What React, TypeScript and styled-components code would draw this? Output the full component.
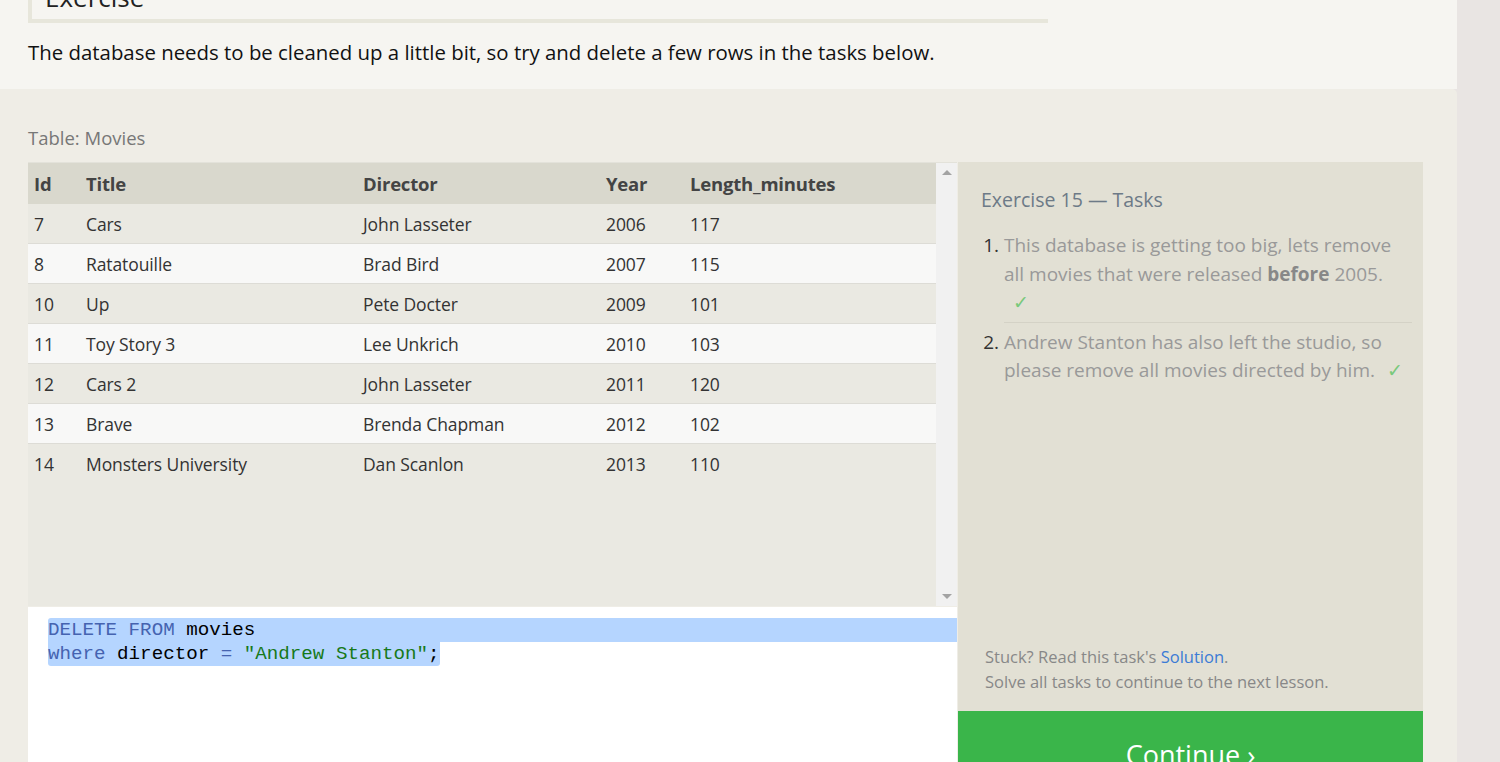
import React from 'react';
import styled, { createGlobalStyle } from 'styled-components';

const GlobalStyle = createGlobalStyle`
  html, body {
    margin: 0;
    padding: 0;
    background: #e9e5e3;
    font-family: "Open Sans", "Noto Sans", sans-serif;
    overflow: hidden;
  }
`;

interface Movie {
  id: number;
  title: string;
  director: string;
  year: number;
  length: number;
}

const movies: Movie[] = [
  { id: 7, title: 'Cars', director: 'John Lasseter', year: 2006, length: 117 },
  { id: 8, title: 'Ratatouille', director: 'Brad Bird', year: 2007, length: 115 },
  { id: 10, title: 'Up', director: 'Pete Docter', year: 2009, length: 101 },
  { id: 11, title: 'Toy Story 3', director: 'Lee Unkrich', year: 2010, length: 103 },
  { id: 12, title: 'Cars 2', director: 'John Lasseter', year: 2011, length: 120 },
  { id: 13, title: 'Brave', director: 'Brenda Chapman', year: 2012, length: 102 },
  { id: 14, title: 'Monsters University', director: 'Dan Scanlon', year: 2013, length: 110 },
];

const Page = styled.div`
  width: 1457px;
  height: 762px;
  overflow: hidden;
`;

const Intro = styled.section`
  display: flow-root;
  background: #f6f5f1;
  padding: 0 28px;
  height: 89px;
  box-sizing: border-box;
`;

const HeadingBox = styled.div`
  width: 1020px;
  height: 70px;
  margin-top: -47px;
  border-left: 4px solid #e7e6db;
  border-bottom: 4px solid #e7e6db;
  box-sizing: border-box;
  padding: 0 0 0 13px;
  font-size: 26px;
  line-height: 88px;
  color: #222;
  overflow: hidden;
`;

const IntroText = styled.p`
  margin: 15px 0 0;
  font-size: 20.4px;
  line-height: 28px;
  color: #111;
  white-space: nowrap;
`;

const Lesson = styled.section`
  background: #efede6;
  border-top-right-radius: 5px;
  padding: 36px 0 0 28px;
  height: 673px;
  box-sizing: border-box;
`;

const TableLabel = styled.div`
  font-size: 18.5px;
  color: #777;
  height: 26px;
  line-height: 26px;
  margin-bottom: 11px;
`;

const Workspace = styled.div`
  display: flex;
  width: 1395px;
`;

const LeftColumn = styled.div`
  width: 929px;
  display: flex;
  flex-direction: column;
`;

const TableFrame = styled.div`
  display: flex;
  height: 443px;
  background: #eae9e2;
  border-top: 1px solid #e3e2da;
`;

const TableScroll = styled.div`
  flex: 1;
  overflow: hidden;
`;

const Scrollbar = styled.div`
  width: 21px;
  background: #f1f1f1;
  display: flex;
  flex-direction: column;
  justify-content: space-between;
  align-items: center;
  padding: 7px 0;
  box-sizing: border-box;
`;

const Arrow = styled.div<{ $down?: boolean }>`
  width: 0;
  height: 0;
  border-left: 5px solid transparent;
  border-right: 5px solid transparent;
  ${(p) => (p.$down ? 'border-top: 5px solid #a3a3a3;' : 'border-bottom: 5px solid #a3a3a3;')}
`;

const StyledTable = styled.table`
  width: 100%;
  border-collapse: collapse;
  table-layout: fixed;
`;

const StyledTh = styled.th<{ $w: number }>`
  width: ${(p) => p.$w - 12}px;
  text-align: left;
  font-weight: 700;
  font-size: 18.5px;
  color: #444;
  background: #d9d8cd;
  height: 41px;
  padding: 0 6px;
  letter-spacing: -0.2px;
`;

const Row = styled.tr<{ $even: boolean }>`
  background: ${(p) => (p.$even ? '#f8f8f7' : '#eae9e2')};
  border-bottom: 1px solid #dddcd6;

  &:last-child {
    border-bottom: none;
  }
`;

const StyledTd = styled.td`
  height: 39px;
  padding: 0 6px;
  font-size: 17.5px;
  color: #333;
  letter-spacing: -0.1px;
  white-space: nowrap;
`;

const Editor = styled.div`
  margin-top: 1px;
  background: #fff;
  height: 160px;
  padding-top: 11px;
  box-sizing: border-box;
  font-family: "Liberation Mono", "DejaVu Sans Mono", monospace;
  font-size: 19.2px;
  line-height: 24px;
`;

const CodeLine = styled.div<{ $full?: boolean }>`
  margin-left: 20px;
  background: #b5d5ff;
  display: ${(p) => (p.$full ? 'block' : 'inline-block')};
  border-radius: ${(p) => (p.$full ? '3px 0 0 0' : '0 0 3px 3px')};
  white-space: pre;
`;

const Keyword = styled.span`
  color: #4563b0;
`;

const Str = styled.span`
  color: #17791a;
`;

const Plain = styled.span`
  color: #000;
`;

const TaskPanel = styled.aside`
  width: 465px;
  margin-left: 1px;
  display: flex;
  flex-direction: column;
`;

const TaskBody = styled.div`
  background: #e2e0d4;
  height: 549px;
  padding: 24px 11px 0 23px;
  box-sizing: border-box;
  display: flex;
  flex-direction: column;
`;

const TaskTitle = styled.h3`
  margin: 0 0 17px;
  font-weight: 400;
  font-size: 19.5px;
  color: #6d7a87;
  line-height: 28px;
`;

const TaskList = styled.ol`
  margin: 0;
  padding: 0 0 0 23px;
  color: #999;
  font-size: 19px;
  line-height: 28.5px;

  li::marker {
    color: #333;
  }
`;

const TaskItem = styled.li<{ $last?: boolean }>`
  padding: 0 0 ${(p) => (p.$last ? '0' : '5px')};
  margin-bottom: 5px;
  border-bottom: ${(p) => (p.$last ? 'none' : '1px solid #d4d2c6')};
`;

const Check = styled.span<{ $gap: number }>`
  color: #79c97b;
  margin-left: ${(p) => p.$gap}px;
`;

const Bold = styled.b`
  color: #888;
`;

const Footer = styled.div`
  margin-top: auto;
  padding: 0 0 17px 4px;
  font-size: 16.5px;
  line-height: 25px;
  color: #888;
`;

const Link = styled.a`
  color: #3b7bd6;
  text-decoration: none;
`;

const ContinueButton = styled.button`
  height: 70px;
  border: none;
  background: #3ab54a;
  color: #fff;
  font-family: "Open Sans", "Noto Sans", sans-serif;
  font-size: 27px;
  padding: 17px 0 0;
  text-align: center;
`;

const columns: Array<{ label: string; w: number }> = [
  { label: 'Id', w: 52 },
  { label: 'Title', w: 277 },
  { label: 'Director', w: 243 },
  { label: 'Year', w: 84 },
  { label: 'Length_minutes', w: 252 },
];

const App = () => (
  <Page>
    <GlobalStyle />
    <Intro>
      <HeadingBox>Exercise</HeadingBox>
      <IntroText>
        The database needs to be cleaned up a little bit, so try and delete a few rows in the tasks below.
      </IntroText>
    </Intro>
    <Lesson>
      <TableLabel>Table: Movies</TableLabel>
      <Workspace>
        <LeftColumn>
          <TableFrame>
            <TableScroll>
              <StyledTable>
                <thead>
                  <tr>
                    {columns.map((c) => (
                      <StyledTh key={c.label} $w={c.w}>{c.label}</StyledTh>
                    ))}
                  </tr>
                </thead>
                <tbody>
                  {movies.map((m, i) => (
                    <Row key={m.id} $even={i % 2 === 1}>
                      <StyledTd>{m.id}</StyledTd>
                      <StyledTd>{m.title}</StyledTd>
                      <StyledTd>{m.director}</StyledTd>
                      <StyledTd>{m.year}</StyledTd>
                      <StyledTd>{m.length}</StyledTd>
                    </Row>
                  ))}
                </tbody>
              </StyledTable>
            </TableScroll>
            <Scrollbar>
              <Arrow />
              <Arrow $down />
            </Scrollbar>
          </TableFrame>
          <Editor>
            <CodeLine $full>
              <Keyword>DELETE FROM</Keyword> <Plain>movies</Plain>
            </CodeLine>
            <CodeLine>
              <Keyword>where</Keyword> <Plain>director</Plain> <Keyword>=</Keyword> <Str>"Andrew Stanton"</Str><Plain>;</Plain>
            </CodeLine>
          </Editor>
        </LeftColumn>
        <TaskPanel>
          <TaskBody>
            <TaskTitle>Exercise 15 — Tasks</TaskTitle>
            <TaskList>
              <TaskItem>
                This database is getting too big, lets remove all movies that were released <Bold>before</Bold> 2005.
                <br />
                <Check $gap={9}>✓</Check>
              </TaskItem>
              <TaskItem $last>
                Andrew Stanton has also left the studio, so please remove all movies directed by him.
                <Check $gap={12}>✓</Check>
              </TaskItem>
            </TaskList>
            <Footer>
              Stuck? Read this task's <Link href="#">Solution</Link>.
              <br />
              Solve all tasks to continue to the next lesson.
            </Footer>
          </TaskBody>
          <ContinueButton>Continue ›</ContinueButton>
        </TaskPanel>
      </Workspace>
    </Lesson>
  </Page>
);

export default App;
